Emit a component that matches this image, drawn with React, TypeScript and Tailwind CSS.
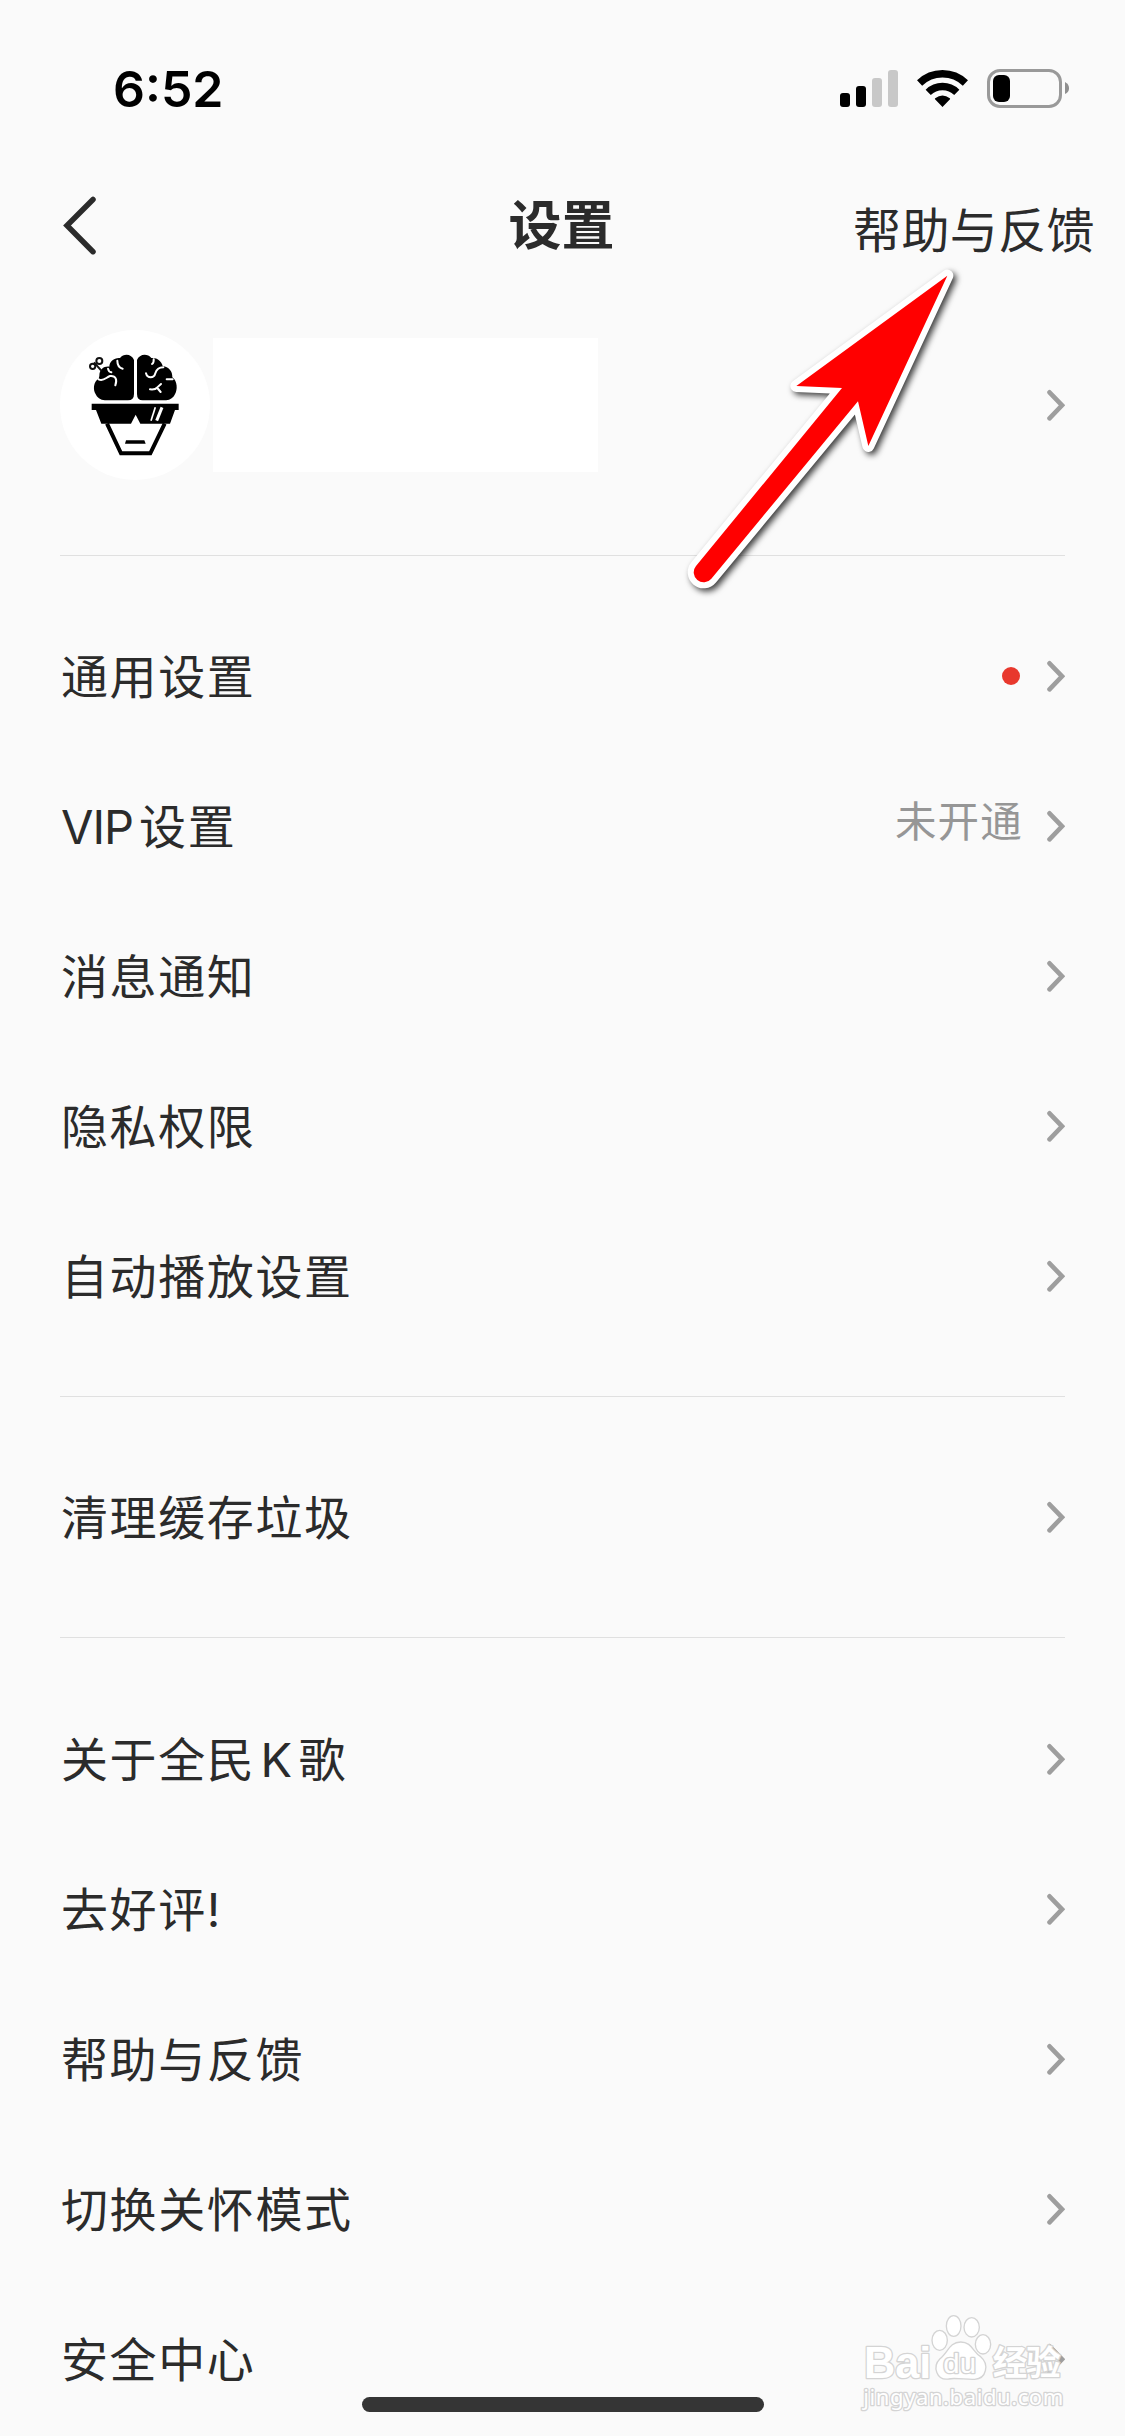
import React from 'react';

type Item = {
    label: string;
    value?: string;
    dot?: boolean;
};

const GROUPS: Item[][] = [
    [
        { label: '通用设置', dot: true },
        { label: 'VIP设置', value: '未开通' },
        { label: '消息通知' },
        { label: '隐私权限' },
        { label: '自动播放设置' },
    ],
    [{ label: '清理缓存垃圾' }],
    [
        { label: '关于全民K歌' },
        { label: '去好评!' },
        { label: '帮助与反馈' },
        { label: '切换关怀模式' },
        { label: '安全中心' },
    ],
];

function Chevron() {
    return (
        <svg className="h-8 w-5 shrink-0" viewBox="0 0 20 32" fill="none" stroke="#9e9e9e" strokeWidth="4.6" strokeLinecap="round">
            <path d="M4.5 3.3 17 16.3 4.5 29.3" />
        </svg>
    );
}

// Latin runs inside a Chinese label get a little air on the inner sides
function Label({ text }: { text: string }) {
    const parts = text.split(/([A-Za-z]+)/).filter(Boolean);
    return (
        <span className="ml-px text-[47px] leading-none tracking-[1.6px] whitespace-nowrap">
            {parts.map((part, i) =>
                /[A-Za-z]/.test(part) ? (
                    <span key={i} className={i === 0 ? 'mr-1.5 tracking-[-1px]' : 'mr-[5px] ml-[5px]'}>
                        {part}
                    </span>
                ) : (
                    part
                )
            )}
        </span>
    );
}

function StatusBar() {
    return (
        <div className="flex h-[178px] items-center justify-between pr-[56px] pl-[113px]">
            <span className="font-['Inter',sans-serif] text-[50px] leading-none font-semibold text-black">6:52</span>
            <svg className="h-[40px] w-[229px]" viewBox="840 69 229 40">
                <rect x="840" y="93" width="10" height="14" rx="3" />
                <rect x="856" y="86" width="10" height="21" rx="3" />
                <rect x="872" y="78" width="10" height="29" rx="3" fill="#c8c8c8" />
                <rect x="888" y="70" width="10" height="37" rx="3" fill="#c8c8c8" />
                <g fill="none" stroke="#000" strokeWidth="7.4">
                    <path d="M919.6 83A33 33 0 0 1 965.4 83" />
                    <path d="M928.2 92.3A20.5 20.5 0 0 1 956.8 92.3" />
                </g>
                <path d="M942.5 107 935 99.2Q934.6 98.6 935.2 98.2Q942.5 92.8 949.8 98.2Q950.4 98.6 950 99.2Z" />
                <rect x="988.5" y="70.5" width="72" height="36" rx="11.5" fill="none" stroke="#999" strokeWidth="3" />
                <rect x="993" y="75" width="17" height="27" rx="6" />
                <path d="M1065 82Q1069 84 1069 88.2T1065 94Z" fill="#8f8f8f" />
            </svg>
        </div>
    );
}

function Header() {
    return (
        <header className="grid h-[96px] grid-cols-3 items-center pr-[30px] pl-[60px]">
            <svg className="h-[60px] w-[40px]" viewBox="0 0 40 60" fill="none" stroke="#2b2b2b" strokeWidth="5.5" strokeLinecap="round">
                <path d="M33 3.5 7 29.5 33 55.7" />
            </svg>
            <h1 className="-ml-[32px] text-center text-[53px] leading-none font-bold">设置</h1>
            <span className="mt-[9px] justify-self-end text-[48px] leading-none tracking-[0.4px] whitespace-nowrap">帮助与反馈</span>
        </header>
    );
}

function Avatar() {
    return (
        <svg className="h-[150px] w-[150px] shrink-0 rounded-full bg-white" viewBox="60 60 450 450">
            <g fill="#000">
                <path d="M282 150C276 132 252 128 240 144C224 142 208 154 208 170C192 168 178 178 178 198L176 206C160 214 158 240 168 254C174 266 186 271 200 271H264Q282 271 282 252Z" />
                <path d="M291 150C297 132 322 128 334 144C350 142 364 152 368 168C386 170 398 184 397 202C412 212 414 240 404 254C398 266 386 271 374 271H308Q291 271 291 252Z" />
                <path d="M155 281H416V300H405L390 341H301L287 314L273 341H184L168 300H155Z" />
                <path d="M258 391H313L317 401H255Z" />
            </g>
            <g fill="none" stroke="#fff" strokeWidth="6" strokeLinecap="round">
                <path d="M232 152Q232 172 248 176" />
                <path d="M176 208C190 216 198 202 210 198C228 196 232 210 226 226" />
                <path d="M204 176Q206 186 214 187" />
                <path d="M318 190C322 206 342 206 346 190C350 176 362 172 370 172" />
                <path d="M341 148Q342 158 336 162" />
                <path d="M398 208H380M330 238Q346 240 352 232L363 222M352 234L362 246" />
            </g>
            <path d="M346 292 333 332" stroke="#fff" strokeWidth="5" />
            <path d="M366 292 350 332" stroke="#fff" strokeWidth="9" />
            <path d="M201 341 243 430H331L374 341" fill="none" stroke="#000" strokeWidth="12" />
            <g fill="none" stroke="#111" strokeWidth="6">
                <circle cx="158" cy="169" r="8" />
                <circle cx="178" cy="153" r="9" />
                <path d="M162 157 184 182" />
            </g>
        </svg>
    );
}

function Profile() {
    return (
        <section className="mx-[60px] flex h-[282px] items-center border-b border-[#e0e0e0] pb-[19px]">
            <Avatar />
            <div className="ml-[3px] h-[134px] w-[385px] bg-white" />
            <div className="ml-auto">
                <Chevron />
            </div>
        </section>
    );
}

function Row({ label, value, dot }: Item) {
    return (
        <li className="flex h-[150px] items-center">
            <Label text={label} />
            <div className="ml-auto flex items-center gap-[25px]">
                {value && (
                    <span className="-mt-1.5 -mr-[3px] text-[41.5px] leading-none tracking-[1.2px] text-[#969696]">{value}</span>
                )}
                {dot && <span className="size-[18px] rounded-full bg-[#e8382d]" />}
                <Chevron />
            </div>
        </li>
    );
}

function PointerArrow() {
    return (
        <svg className="absolute top-[250px] left-[660px] h-[360px] w-[340px] drop-shadow-[3px_3px_3px_rgba(0,0,0,0.75)]" viewBox="0 0 1020 1080">
            <path
                d="M862 77 409 408 546 414 108 948A29 29 0 0 0 154 986L594 454 625 588Z"
                fill="#f00"
                stroke="#fff"
                strokeWidth="36"
                strokeLinejoin="round"
                paintOrder="stroke"
            />
        </svg>
    );
}

function Watermark() {
    return (
        <svg className="absolute top-[2290px] left-[820px] h-[146px] w-[305px]" viewBox="0 0 915 438">
            <g fill="#fff" stroke="#d4d4d4" strokeWidth="4">
                <ellipse cx="359" cy="151" rx="23" ry="30" />
                <ellipse cx="401" cy="108" rx="22" ry="31" />
                <ellipse cx="455" cy="112" rx="23" ry="29" />
                <ellipse cx="489" cy="163" rx="23" ry="29" />
                <path d="M422 156C456 156 458 186 482 200C508 222 500 266 464 268C444 270 402 262 386 267C350 272 336 230 360 206C384 188 388 156 422 156Z" />
            </g>
            <g fill="#fff" stroke="#d4d4d4" strokeWidth="8" paintOrder="stroke" strokeLinejoin="round">
                <text x="132" y="263" fontSize="134" fontWeight="700" textLength="202" lengthAdjust="spacingAndGlyphs" className="font-['Liberation_Sans',sans-serif]">Bai</text>
                <text x="370" y="250" fontSize="82" fontWeight="400" textLength="98" lengthAdjust="spacingAndGlyphs" className="font-['Liberation_Sans',sans-serif]">du</text>
                <text x="518" y="256" fontSize="104" fontWeight="700" textLength="204" className="font-['Noto_Sans_CJK_SC',sans-serif]">经验</text>
                <text x="130" y="344" fontSize="66" textLength="600" className="font-['Noto_Sans',sans-serif]">jingyan.baidu.com</text>
            </g>
        </svg>
    );
}

export default function App() {
    return (
        <div className="relative h-[2436px] w-[1125px] overflow-hidden bg-[#fafafa] font-['Inter','Noto_Sans_CJK_SC',sans-serif] text-[#2b2b2b]">
            <StatusBar />
            <Header />
            <Profile />
            <main className="divide-y divide-[#e0e0e0] px-[60px]">
                {GROUPS.map((items, i) => (
                    <ul key={i} className="py-[45px] last:pt-[46px]">
                        {items.map((item) => (
                            <Row key={item.label} {...item} />
                        ))}
                    </ul>
                ))}
            </main>
            <PointerArrow />
            <Watermark />
            {/* Home indicator */}
            <div className="absolute top-[2397px] left-[362px] h-[15px] w-[402px] rounded-full bg-[#353535]" />
        </div>
    );
}
